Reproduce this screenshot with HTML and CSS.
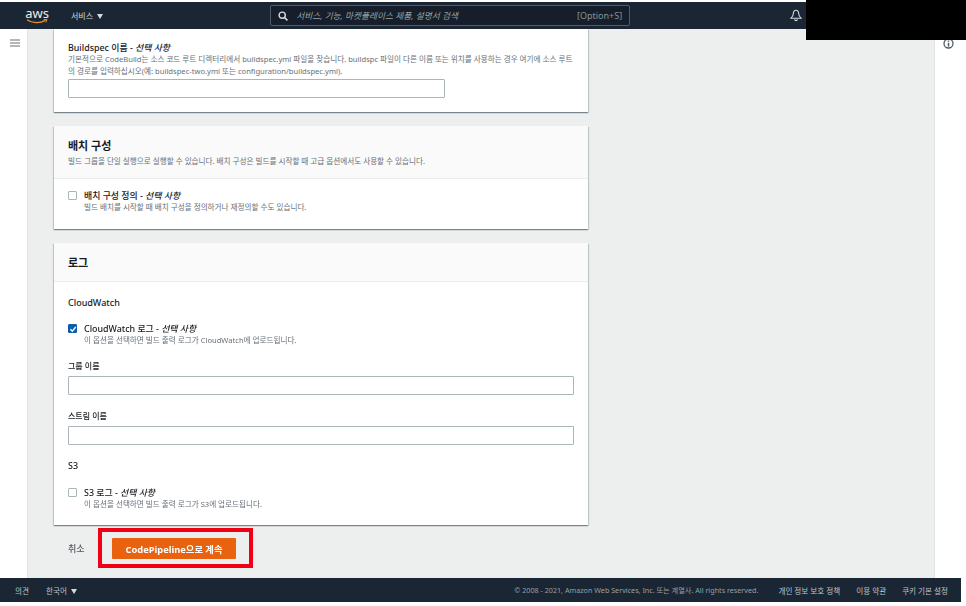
FILE: index.html
```html
<!DOCTYPE html>
<html lang="ko">
<head>
    <meta charset="UTF-8">
    <meta name="viewport" content="width=device-width, initial-scale=1.0">
    <title>CodeBuild - 빌드 프로젝트 생성</title>
    <link rel="stylesheet" href="styles.css">
</head>
<body>
    <div class="page">
        <header class="topbar">
            <div class="logo">
                <span class="logo-text">aws</span>
                <svg class="logo-smile" viewBox="0 0 22 5" width="22" height="5">
                    <path d="M1 0.8 C6 4.4 14 4.6 19.4 1.4" fill="none" stroke="#ec912d" stroke-width="1.3"/>
                    <path d="M17.6 0.7 L21 0.5 L19.8 3.4" fill="none" stroke="#ec912d" stroke-width="1"/>
                </svg>
            </div>
            <div class="services">서비스 <span class="caret"></span></div>
            <div class="search">
                <svg class="search-icon" viewBox="0 0 10 10" width="10" height="10">
                    <circle cx="4.2" cy="4.2" r="3.1" fill="none" stroke="#d5dbdb" stroke-width="1.4"/>
                    <path d="M6.5 6.5 L9.4 9.4" stroke="#d5dbdb" stroke-width="1.6"/>
                </svg>
                <span class="search-text">서비스, 기능, 마켓플레이스 제품, 설명서 검색</span>
                <span class="search-key">[Option+S]</span>
            </div>
            <svg class="bell" viewBox="0 0 12 13" width="12" height="13">
                <path d="M6 1.2 C3.8 1.2 3.4 3 3.3 4.8 C3.2 6.6 2.4 7.8 1 9.2 L11 9.2 C9.6 7.8 8.8 6.6 8.7 4.8 C8.6 3 8.2 1.2 6 1.2 Z" fill="none" stroke="#d5dbdb" stroke-width="1.1"/>
                <path d="M4.6 10.4 C4.9 12 7.1 12 7.4 10.4" fill="none" stroke="#d5dbdb" stroke-width="1.1"/>
            </svg>
        </header>

        <div class="workspace">
            <nav class="sidebar">
                <svg viewBox="0 0 10 8" width="10" height="8">
                    <path d="M0 1 H10 M0 4 H10 M0 7 H10" stroke="#687078" stroke-width="1.2"/>
                </svg>
            </nav>

            <main class="content">
                <section class="card card-first">
                    <div class="card-body">
                        <div class="field-label">Buildspec 이름 - <em>선택 사항</em></div>
                        <p class="hint">기본적으로 CodeBuild는 소스 코드 루트 디렉터리에서 buildspec.yml 파일을 찾습니다. buildspc 파일이 다른 이름 또는 위치를 사용하는 경우 여기에 소스 루트<br>의 경로를 입력하십시오(예: buildspec-two.yml 또는 configuration/buildspec.yml).</p>
                        <div class="input input-short"></div>
                    </div>
                </section>

                <section class="card">
                    <div class="card-head">
                        <h2>배치 구성</h2>
                        <p class="hint">빌드 그룹을 단일 실행으로 실행할 수 있습니다. 배치 구성은 빌드를 시작할 때 고급 옵션에서도 사용할 수 있습니다.</p>
                    </div>
                    <div class="card-body batch-body">
                        <div class="check-row">
                            <span class="checkbox"></span>
                            <div>
                                <div class="field-label">배치 구성 정의 - <em>선택 사항</em></div>
                                <p class="hint">빌드 배치를 시작할 때 배치 구성을 정의하거나 재정의할 수도 있습니다.</p>
                            </div>
                        </div>
                    </div>
                </section>

                <section class="card">
                    <div class="card-head card-head-slim">
                        <h2>로그</h2>
                    </div>
                    <div class="card-body logs-body">
                        <h3>CloudWatch</h3>
                        <div class="check-row row-cloudwatch">
                            <span class="checkbox checked">
                                <svg viewBox="0 0 10 10" width="10" height="10">
                                    <path d="M2.4 5.2 L4.3 7.1 L7.8 3" fill="none" stroke="#fff" stroke-width="1.4"/>
                                </svg>
                            </span>
                            <div>
                                <div class="field-label">CloudWatch 로그 - <em>선택 사항</em></div>
                                <p class="hint">이 옵션을 선택하면 빌드 출력 로그가 CloudWatch에 업로드됩니다.</p>
                            </div>
                        </div>
                        <div class="field-label field-label-small label-group">그룹 이름</div>
                        <div class="input"></div>
                        <div class="field-label field-label-small label-stream">스트림 이름</div>
                        <div class="input"></div>
                        <h3 class="heading-s3">S3</h3>
                        <div class="check-row row-s3">
                            <span class="checkbox"></span>
                            <div>
                                <div class="field-label">S3 로그 - <em>선택 사항</em></div>
                                <p class="hint">이 옵션을 선택하면 빌드 출력 로그가 S3에 업로드됩니다.</p>
                            </div>
                        </div>
                    </div>
                </section>

                <div class="actions">
                    <span class="cancel">취소</span>
                    <div class="highlight">
                        <button class="primary-btn">CodePipeline으로 계속</button>
                    </div>
                </div>
            </main>

            <aside class="tools">
                <svg viewBox="0 0 11 11" width="11" height="11">
                    <circle cx="5.5" cy="5.5" r="4.5" fill="none" stroke="#545b64" stroke-width="1.3"/>
                    <path d="M5.5 2.6 V3.8 M5.5 4.8 V8.4" stroke="#545b64" stroke-width="1.5"/>
                </svg>
            </aside>
        </div>

        <footer class="footer">
            <span class="footer-feedback">의견</span>
            <span class="footer-lang">한국어 <span class="caret"></span></span>
            <span class="copyright">© 2008 - 2021, Amazon Web Services, Inc. 또는 계열사. All rights reserved.</span>
            <span class="footer-link">개인 정보 보호 정책</span>
            <span class="footer-link">이용 약관</span>
            <span class="footer-link">쿠키 기본 설정</span>
        </footer>
    </div>

    <div class="redaction"></div>
</body>
</html>
```

FILE: styles.css
```css
:root {
    --ink: #1b2634;
    --page-bg: #edefef;
    --text: #16191f;
    --muted: #687078;
    --orange: #e8620f;
}

* {
    margin: 0;
    padding: 0;
    box-sizing: border-box;
    font-family: 'Noto Sans', 'Noto Sans CJK KR', sans-serif;
}

html, body {
    height: 606px;
    overflow: hidden;
    background-color: #fff;
}

.page {
    display: flex;
    flex-direction: column;
    height: 606px;
    padding: 2px 0 4px;
    filter: blur(0.5px);
}

svg {
    display: block;
}

.topbar {
    display: flex;
    align-items: center;
    flex: none;
    height: 27px;
    background-color: var(--ink);
    color: #d5dbdb;
}

.logo {
    display: flex;
    flex-direction: column;
    align-items: center;
    width: 22px;
    margin-left: 26px;
}

.logo-text {
    font-size: 13px;
    line-height: 11px;
    color: #eaeded;
}

.services {
    margin-left: 23px;
    font-size: 8px;
}

.caret {
    display: inline-block;
    width: 0;
    height: 0;
    margin-left: 2px;
    border-left: 3.5px solid transparent;
    border-right: 3.5px solid transparent;
    border-top: 5px solid #d5dbdb;
}

.search {
    display: flex;
    align-items: center;
    width: 360px;
    height: 21px;
    margin-left: 167px;
    padding: 0 7px;
    border: 1px solid #545b64;
    border-radius: 2px;
    background-color: #161e2b;
}

.search-text {
    margin-left: 8px;
    font-size: 8.7px;
    font-style: italic;
    color: #95a5a6;
}

.search-key {
    margin-left: auto;
    font-size: 9px;
    color: #879596;
}

.bell {
    margin-left: 160px;
}

.workspace {
    display: grid;
    grid-template-columns: 28px 1fr 32px;
    flex: 1;
    min-height: 0;
}

.sidebar {
    padding: 10px 0 0 10px;
    border-right: 1px solid #dfe3e3;
}

.content {
    display: flex;
    flex-direction: column;
    gap: 14px;
    padding: 0 346px 0 26px;
    background-color: var(--page-bg);
}

.tools {
    padding: 9px 0 0 8px;
    border-left: 1px solid #dfe3e3;
}

.card {
    background-color: #fff;
    box-shadow: 0 1px 1px 0 rgba(0, 28, 36, 0.3), 1px 1px 1px 0 rgba(0, 28, 36, 0.15), -1px 1px 1px 0 rgba(0, 28, 36, 0.15);
}

.card-first .card-body {
    padding: 13px 14px 14px;
}

.card-head {
    height: 53px;
    padding: 13px 14px 0;
    background-color: #fafafa;
    border-bottom: 1px solid #eaeded;
}

.card-head-slim {
    height: 39px;
}

h2 {
    font-size: 11px;
    line-height: 14px;
    font-weight: 700;
    color: var(--text);
}

.card-head .hint {
    margin-top: 2px;
}

h3 {
    font-size: 9px;
    line-height: 12px;
    font-weight: 500;
    color: var(--text);
}

.field-label {
    font-size: 8.9px;
    line-height: 11px;
    font-weight: 500;
    color: var(--text);
}

.field-label-small {
    font-size: 8px;
}

.hint {
    font-size: 7.6px;
    line-height: 12px;
    color: var(--muted);
}

.input {
    height: 19px;
    border: 1px solid #aab7b8;
    border-radius: 1px;
    background-color: #fff;
}

.input-short {
    width: 377px;
    margin-top: 2px;
}

.batch-body {
    padding: 10px 14px 16px;
}

.logs-body {
    padding: 15px 14px 15px;
}

.check-row {
    display: flex;
    gap: 7px;
}

.check-row .field-label {
    line-height: 14px;
    margin-bottom: -2px;
}

.checkbox {
    flex: none;
    width: 9px;
    height: 9px;
    margin-top: 2px;
    border: 1px solid #aab7b8;
    border-radius: 1px;
    background-color: #fff;
}

.checkbox.checked {
    border-color: #0b5cab;
    background-color: #0b5cab;
}

.checkbox svg {
    margin: -1px;
}

.row-cloudwatch {
    margin-top: 13px;
}

.label-group {
    margin-top: 14px;
    margin-bottom: 5px;
}

.label-stream {
    margin-top: 15px;
    margin-bottom: 5px;
}

.heading-s3 {
    margin-top: 15px;
}

.row-s3 {
    margin-top: 14px;
}

.actions {
    display: flex;
    align-items: center;
    margin-top: -11px;
    padding-left: 14px;
}

.cancel {
    width: 30px;
    font-size: 9px;
    font-weight: 500;
    color: #545b64;
}

.highlight {
    padding: 6px 13px 5px 10px;
    border: 4px solid #f00014;
}

.primary-btn {
    display: block;
    width: 124px;
    height: 21px;
    border: none;
    border-radius: 1px;
    background-color: var(--orange);
    color: #fff;
    font-size: 9.3px;
    font-weight: 700;
}

.footer {
    display: flex;
    align-items: center;
    flex: none;
    width: 961px;
    height: 24px;
    padding-left: 15px;
    background-color: var(--ink);
    color: #bcc4c6;
    font-size: 7.6px;
}

.footer-lang {
    margin-left: 17px;
}

.copyright {
    margin-left: auto;
    margin-right: 20px;
    font-size: 7.2px;
    color: #95a1a4;
}

.footer-link {
    margin-right: 16px;
}

.footer-link:last-child {
    margin-right: 13px;
}

.redaction {
    position: absolute;
    top: 0;
    right: 0;
    width: 160px;
    height: 40px;
    background-color: #000;
}
```
